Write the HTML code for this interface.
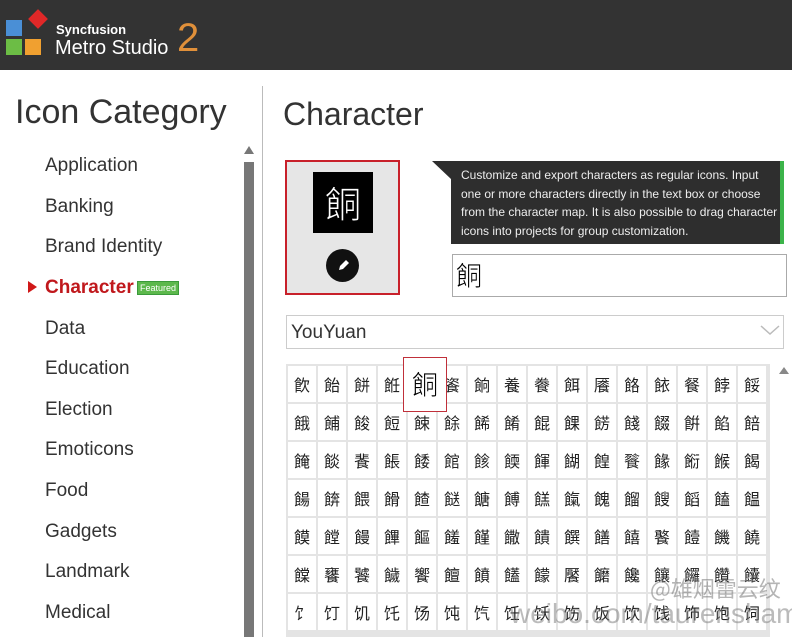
<!DOCTYPE html>
<html><head><meta charset="utf-8"><style>
*{margin:0;padding:0;box-sizing:border-box}
body{width:792px;height:637px;overflow:hidden;background:#fff;font-family:"Liberation Sans","Noto Sans CJK SC",sans-serif;position:relative}
.hdr{position:absolute;left:0;top:0;width:792px;height:70px;background:#333}
.abs{position:absolute}
.cat{position:absolute;left:45px;font-size:19px;color:#333}
.grid{position:absolute;left:286px;top:364px;width:484px;height:273px;background:#e4e4e4}
.c{position:absolute;width:28px;height:36px;background:#fff;font-family:"Noto Sans CJK SC",sans-serif;font-size:16px;color:#222;text-align:center;line-height:36px}
</style></head><body>
<div class="hdr">
 <div class="abs" style="left:6px;top:20px;width:16px;height:16px;background:#4a8fd6"></div>
 <div class="abs" style="left:6px;top:39px;width:16px;height:16px;background:#6cbd45"></div>
 <div class="abs" style="left:25px;top:39px;width:16px;height:16px;background:#f0a030"></div>
 <div class="abs" style="left:31px;top:12px;width:14px;height:14px;background:#e02828;transform:rotate(45deg)"></div>
 <div class="abs" style="left:56px;top:22px;color:#fff;font-size:13px;font-weight:bold">Syncfusion</div>
 <div class="abs" style="left:55px;top:37px;color:#fff;font-size:20px">Metro Studio</div>
 <div class="abs" style="left:177px;top:18px;color:#e0903a;font-size:40px;line-height:40px">2</div>
</div>
<div class="abs" style="left:15px;top:93px;font-size:34px;color:#333">Icon Category</div>
<div class="abs" style="left:262px;top:86px;width:1px;height:551px;background:#bbb"></div>
<div class="abs" style="left:244px;top:146px;width:0;height:0;border-left:5px solid transparent;border-right:5px solid transparent;border-bottom:8px solid #777"></div>
<div class="abs" style="left:244px;top:162px;width:10px;height:475px;background:#777"></div>
<div class="cat" style="top:155px">Application</div>
<div class="cat" style="top:196px">Banking</div>
<div class="cat" style="top:236px">Brand Identity</div>
<div class="abs" style="left:28px;top:281px;width:0;height:0;border-top:6px solid transparent;border-bottom:6px solid transparent;border-left:9px solid #d01818"></div>
<div class="cat" style="top:277px;color:#c0181c;font-weight:bold">Character</div>
<div class="abs" style="left:137px;top:281px;background:#5cb84c;color:#fff;font-size:9px;padding:1px 2px;border:1px solid #3a9a3a">Featured</div>
<div class="cat" style="top:318px">Data</div>
<div class="cat" style="top:358px">Education</div>
<div class="cat" style="top:399px">Election</div>
<div class="cat" style="top:439px">Emoticons</div>
<div class="cat" style="top:480px">Food</div>
<div class="cat" style="top:521px">Gadgets</div>
<div class="cat" style="top:561px">Landmark</div>
<div class="cat" style="top:602px">Medical</div>
<div class="abs" style="left:283px;top:96px;font-size:32px;color:#333">Character</div>
<div class="abs" style="left:285px;top:160px;width:115px;height:135px;background:#e6e6e6;border:2px solid #c8202a"></div>
<div class="abs" style="left:313px;top:172px;width:60px;height:61px;background:#000;color:#fff;font-family:'Noto Sans CJK SC',sans-serif;font-size:36px;text-align:center;line-height:60px;font-weight:300">餇</div>
<div class="abs" style="left:326px;top:249px;width:33px;height:33px;border-radius:50%;background:#111"><svg width="33" height="33"><path d="M13 21l1-4 6-6 3 3-6 6z" fill="#fff"/></svg></div>
<div class="abs" style="left:432px;top:161px;width:351px;height:83px;background:#2e2e2e;clip-path:polygon(0 0,100% 0,100% 100%,19px 100%,19px 18px)"></div>
<div class="abs" style="left:780px;top:161px;width:4px;height:83px;background:#3cb44a"></div>
<div class="abs" style="left:461px;top:166px;width:320px;color:#eee;font-size:12px;line-height:18.7px">Customize and export characters as regular icons. Input one or more characters directly in the text box or choose from the character map. It is also possible to drag character icons into projects for group customization.</div>
<div class="abs" style="left:452px;top:254px;width:335px;height:43px;border:1px solid #aaa;font-family:'Noto Sans CJK SC',sans-serif;font-size:26px;line-height:40px;padding-left:3px;font-weight:300">餇</div>
<div class="abs" style="left:286px;top:315px;width:498px;height:34px;border:1px solid #ccc;font-size:19px;color:#333;line-height:34px;padding-left:4px">YouYuan</div>
<svg class="abs" style="left:760px;top:323px" width="20" height="14"><path d="M1 3l9 8 9-8" fill="none" stroke="#bbb" stroke-width="1.5"/></svg>
<div class="grid" id="g"></div>
<div class="abs" style="left:779px;top:367px;width:0;height:0;border-left:5px solid transparent;border-right:5px solid transparent;border-bottom:7px solid #888"></div>
<div class="abs" style="left:403px;top:357px;width:44px;height:55px;background:#fff;border:1px solid #c0303a;font-family:'Noto Sans CJK SC',sans-serif;font-size:26px;text-align:center;line-height:52px;font-weight:300">餇</div>
<div class="abs" style="left:650px;top:572px;font-family:'Noto Sans CJK SC',sans-serif;font-size:22px;color:rgba(120,120,120,.55)">@雄烟雷云纹</div>
<div class="abs" style="left:510px;top:598px;font-size:28px;color:rgba(120,120,120,.5)">weibo.com/taurenshaman</div>
<script>
var s="飮飴餅餁餇餈餉養餋餌餍餎餏餐餑餒餓餔餕餖餗餘餙餚餛餜餝餞餟餠餡餢餣餤餥餦餧館餩餪餫餬餭餮餯餰餱餲餳餴餵餶餷餸餹餺餻餼餽餾餿饀饁饂饃饄饅饆饇饈饉饊饋饌饍饎饏饐饑饒饓饔饕饖饗饘饙饚饛饜饝饞饟饠饡饢饣饤饥饦饧饨饩饪饫饬饭饮饯饰饱饲";
var g=document.getElementById('g'),h='';
for(var i=0;i<112;i++){var r=Math.floor(i/16),c=i%16;h+='<div class="c" style="left:'+(2+c*30)+'px;top:'+(2+r*38)+'px">'+s[i]+'</div>';}
g.innerHTML=h;
</script>
</body></html>
